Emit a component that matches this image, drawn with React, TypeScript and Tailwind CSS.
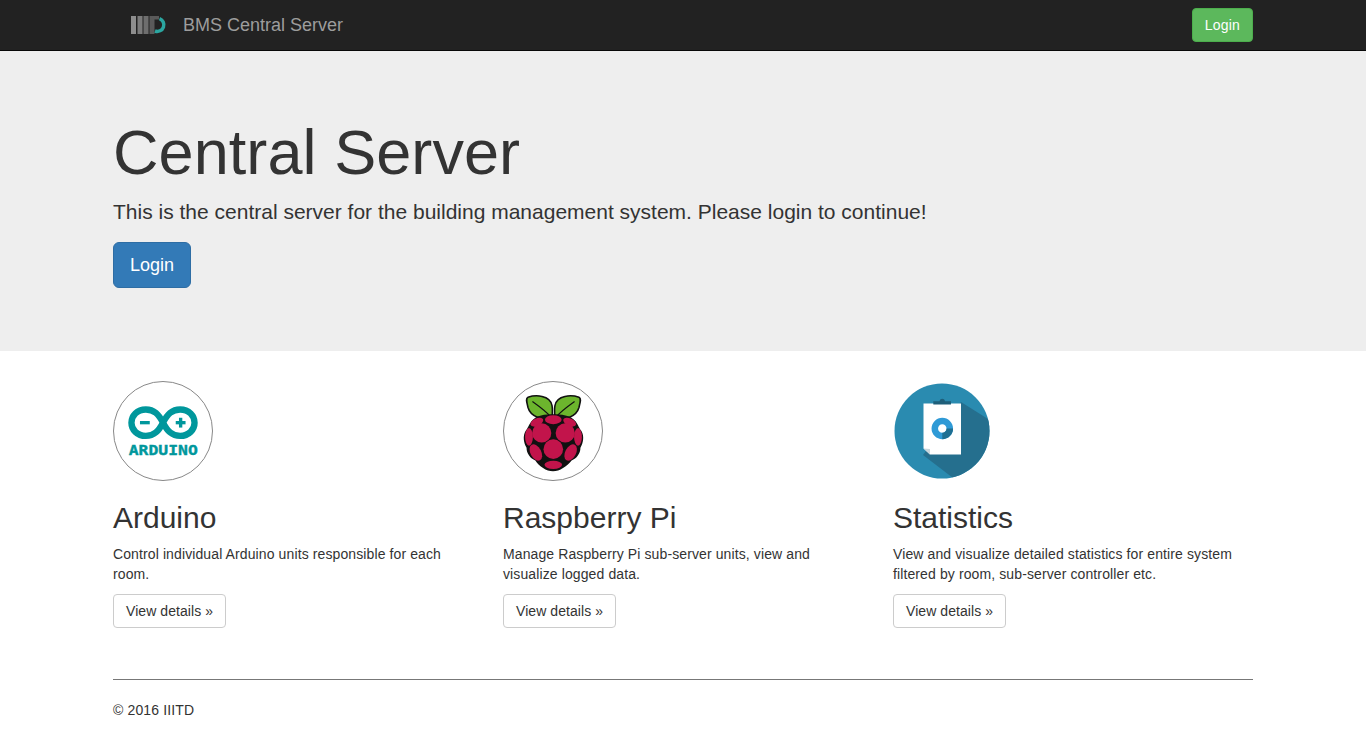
const NavLogo = () => (
  <svg width="38" height="20" viewBox="0 0 38 20">
    <rect x="1" y="1" width="5" height="18" fill="#8e8e8e" />
    <rect x="7.5" y="1" width="5" height="18" fill="#7c7c7c" />
    <rect x="13.5" y="1" width="5" height="18" fill="#6e6e6e" />
    <path d="M19.5 1H29V4.5H24.5V19H19.5Z" fill="#5a5a5a" />
    <path d="M29.5 3.6A6.5 6.5 0 0 1 25 16" fill="none" stroke="#2ba6a0" strokeWidth="3.5" />
  </svg>
);

const ArduinoLogo = () => (
  <svg viewBox="0 0 100 100" className="w-[100px] h-[100px] rounded-full border border-[#888]">
    <path
      d="M50 41.5C45.5 33 41 28 32.5 28C23.5 28 17.8 34.5 17.8 41.5C17.8 48.5 23.5 55 32.5 55C41 55 45.5 50 50 41.5C54.5 33 59 28 67.5 28C76.5 28 82.2 34.5 82.2 41.5C82.2 48.5 76.5 55 67.5 55C59 55 54.5 50 50 41.5Z"
      fill="none"
      stroke="#00979c"
      strokeWidth="6.5"
    />
    <rect x="26.5" y="39.8" width="10" height="3.4" fill="#00979c" />
    <rect x="63" y="39.8" width="10" height="3.4" fill="#00979c" />
    <rect x="66.3" y="36.5" width="3.4" height="10" fill="#00979c" />
    <text
      x="15"
      y="74"
      fontSize="15.2"
      fontWeight="700"
      fill="#00979c"
      stroke="#00979c"
      strokeWidth="0.4"
      textLength="70.5"
      lengthAdjust="spacingAndGlyphs"
      fontFamily="'DejaVu Sans Mono', monospace"
    >
      ARDUINO
    </text>
  </svg>
);

const RaspberryLogo = () => (
  <svg viewBox="0 0 100 100" className="w-[100px] h-[100px] rounded-full border border-[#888]">
    <path d="M49 37C38 39 27 35 24.5 26C23 20 22 16.5 24.5 15.5C32 13 47 13 49 24C49.8 28 49.3 33 49 37Z" fill="#6cb52d" stroke="#111" strokeWidth="1.6" />
    <path d="M52 37C63 39 74 35 76.5 26C78 20 79 16.5 76.5 15.5C69 13 54 13 52 24C51.2 28 51.7 33 52 37Z" fill="#6cb52d" stroke="#111" strokeWidth="1.6" />
    <path d="M29 20C36 25 43 30 48 36M72 20C65 25 58 30 53 36" fill="none" stroke="#111" strokeWidth="1.2" />
    <path
      d="M50 33C58 33 68 34 73 40C76 44 76 46 79 50C82 55 81 62 78 67C78 73 74 78 69 80C64 86 57 91 50 91C43 91 36 86 32 80C27 78 23 73 23 67C20 62 19 55 22 50C25 46 25 44 28 40C33 34 42 33 50 33Z"
      fill="#111"
    />
    <g fill="#c2144b">
      <ellipse cx="50.3" cy="38.5" rx="8.5" ry="4.5" />
      <ellipse cx="33.5" cy="41" rx="7" ry="3.8" transform="rotate(-25 33.5 41)" />
      <ellipse cx="67" cy="41" rx="7" ry="3.8" transform="rotate(25 67 41)" />
      <circle cx="38.5" cy="52" r="9.8" />
      <circle cx="62.5" cy="52" r="9.8" />
      <circle cx="50.3" cy="68.5" r="10" />
      <ellipse cx="25.5" cy="56" rx="4" ry="9" />
      <ellipse cx="75.5" cy="56" rx="4" ry="9" />
      <ellipse cx="32.5" cy="72" rx="5.5" ry="9" transform="rotate(-28 32.5 72)" />
      <ellipse cx="68" cy="72" rx="5.5" ry="9" transform="rotate(28 68 72)" />
      <ellipse cx="50.3" cy="84.5" rx="9" ry="4.2" />
    </g>
  </svg>
);

const StatsLogo = () => (
  <svg viewBox="0 0 100 100" className="w-[100px] h-[100px]">
    <defs>
      <clipPath id="statsCircle">
        <circle cx="49" cy="50" r="47.5" />
      </clipPath>
    </defs>
    <circle cx="49" cy="50" r="47.5" fill="#2a8bb0" />
    <path d="M68 21L100 41V100H64L30 74Z" fill="#256f8e" clipPath="url(#statsCircle)" />
    <path d="M30.5 22.5H68V73.5H37L30.5 67.5Z" fill="#fff" />
    <path d="M30.5 67.5L37 73.5V68Z" fill="#c9d6dc" />
    <path d="M40.3 23.5V20.3H46.5C47 17 51.5 17 52 20.3H58V23.5Z" fill="#1f5f7a" />
    <circle cx="49.3" cy="47.5" r="7.5" fill="none" stroke="#2f9ad6" strokeWidth="6.5" />
    <path d="M56.8 47.5A7.5 7.5 0 0 1 49.3 55" fill="none" stroke="#1f6f92" strokeWidth="6.5" />
  </svg>
);

const features = [
  {
    title: "Arduino",
    text: "Control individual Arduino units responsible for each room.",
    logo: <ArduinoLogo />,
  },
  {
    title: "Raspberry Pi",
    text: "Manage Raspberry Pi sub-server units, view and visualize logged data.",
    logo: <RaspberryLogo />,
  },
  {
    title: "Statistics",
    text: "View and visualize detailed statistics for entire system filtered by room, sub-server controller etc.",
    logo: <StatsLogo />,
  },
];

const App = () => {
  return (
    <div className="min-h-[750px] bg-white text-[#333] text-sm leading-5 font-['Liberation_Sans',Arial,sans-serif]">
      <nav className="h-[51px] bg-[#222] border-b border-[#080808]">
        <div className="w-[1170px] mx-auto pl-[32px] pr-[15px] h-[50px] flex items-center justify-between">
          <div className="flex items-center gap-[15px]">
            <NavLogo />
            <span className="text-lg text-[#9d9d9d]">BMS Central Server</span>
          </div>
          <button className="h-[34px] px-[12px] rounded bg-[#5cb85c] border border-[#4cae4c] text-white tracking-[0.2px]">
            Login
          </button>
        </div>
      </nav>

      <div className="bg-[#eee] h-[300px] pt-[47px]">
        <div className="w-[1170px] mx-auto px-[15px]">
          <h1 className="mt-[20px] mb-[10px] text-[63px] leading-[69.3px] tracking-[0.07px]">Central Server</h1>
          <p className="mb-[15px] text-[21px] leading-[30px]">
            This is the central server for the building management system. Please login to continue!
          </p>
          <button className="h-[46px] px-[16px] rounded-md bg-[#337ab7] border border-[#2e6da4] text-white text-lg">
            Login
          </button>
        </div>
      </div>

      <div className="w-[1170px] mx-auto px-[15px]">
        <div className="grid grid-cols-3 gap-[30px] pt-[30px]">
          {features.map((f) => (
            <div key={f.title}>
              {f.logo}
              <h2 className="mt-[20px] mb-[10px] text-[30px] leading-[33px]">{f.title}</h2>
              <p className="mb-[10px] tracking-[0.11px]">{f.text}</p>
              <button className="h-[34px] px-[12px] rounded bg-white border border-[#ccc] tracking-[0.07px]">
                View details »
              </button>
            </div>
          ))}
        </div>
        <hr className="mt-[51px] mb-[20px] border-t border-[#777]" />
        <p className="tracking-[0.13px]">© 2016 IIITD</p>
      </div>
    </div>
  );
};

export default App;
